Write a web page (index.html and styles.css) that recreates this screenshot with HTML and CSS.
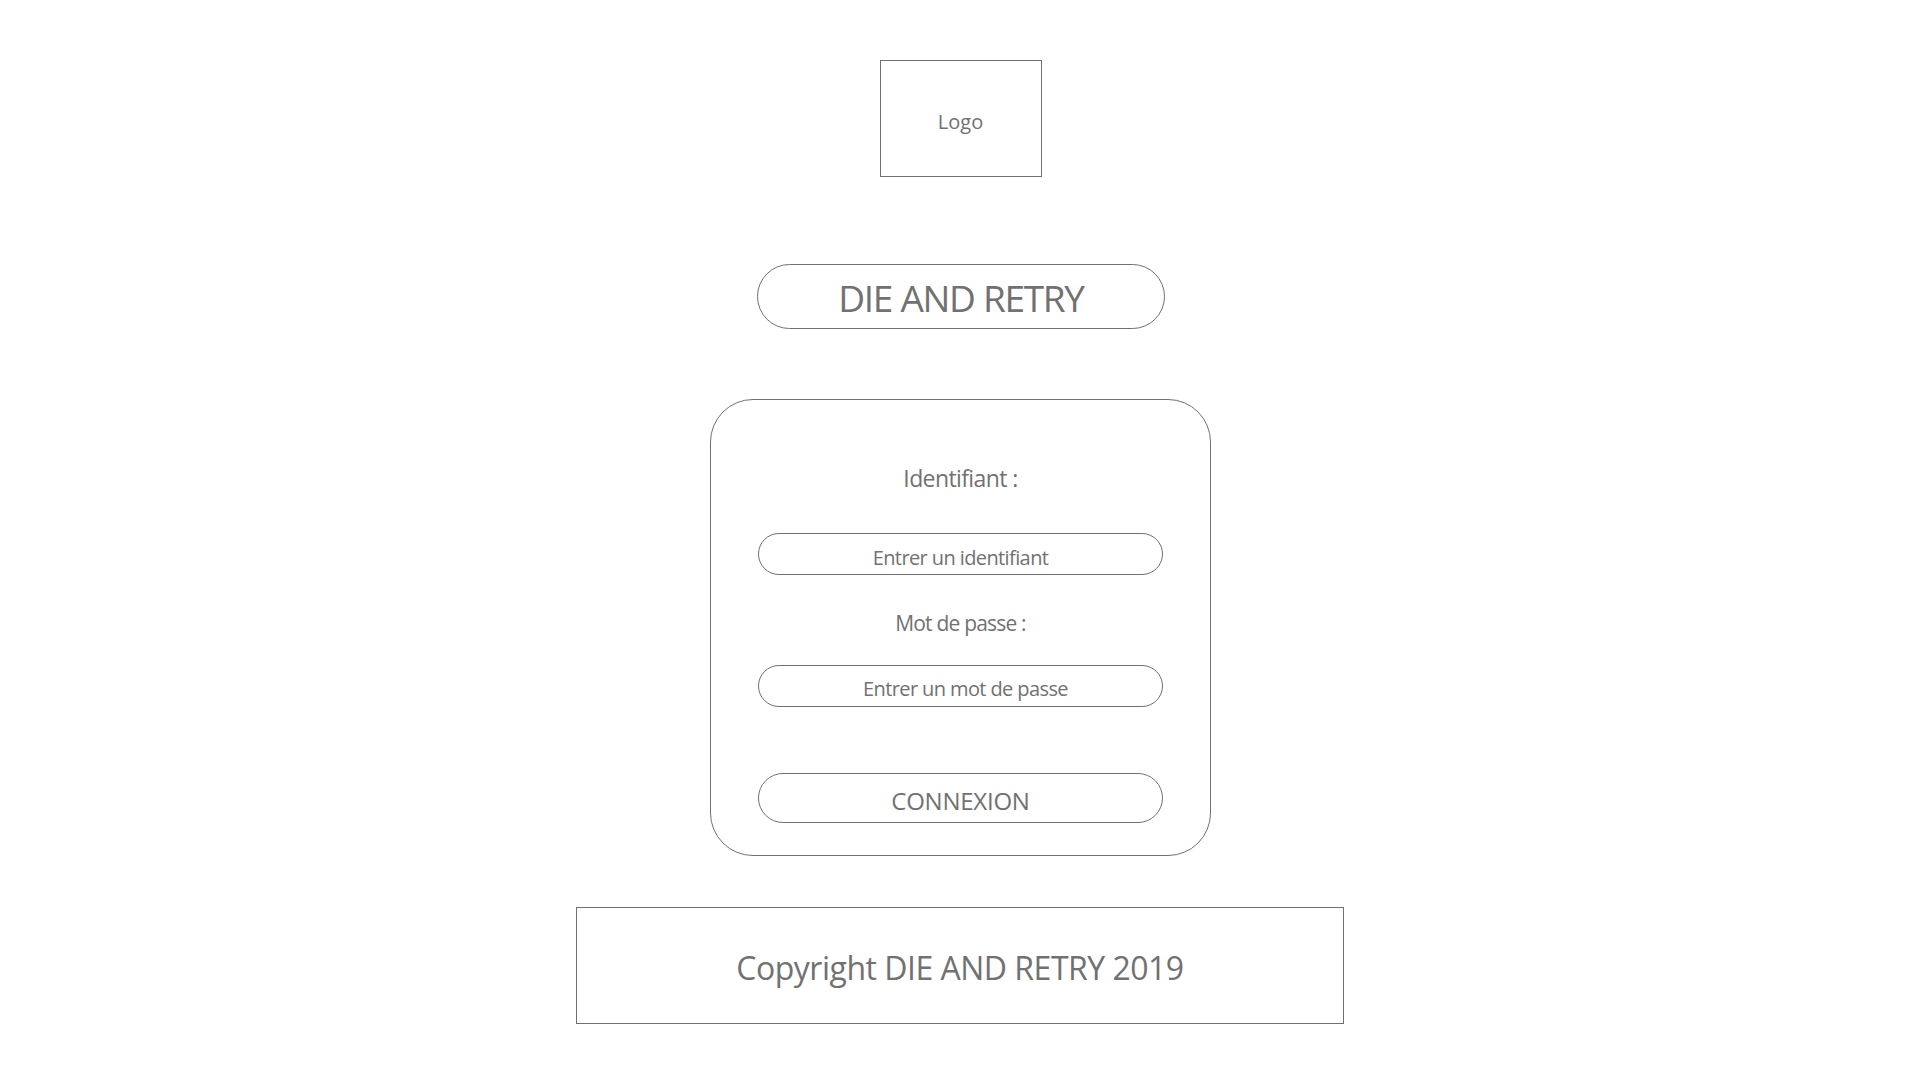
FILE: index.html
```html
<!DOCTYPE html>
<html lang="fr">
<head>
<meta charset="utf-8">
<title>Die and Retry</title>
<link rel="stylesheet" href="styles.css">
</head>
<body>
<div class="page">
  <div class="logo">Logo</div>
  <div class="title">DIE AND RETRY</div>
  <div class="card">
    <div class="label label-id">Identifiant :</div>
    <div class="field field-id">Entrer un identifiant</div>
    <div class="label label-pw">Mot de passe :</div>
    <div class="field field-pw">Entrer un mot de passe</div>
    <div class="button">CONNEXION</div>
  </div>
  <div class="footer">Copyright DIE AND RETRY 2019</div>
</div>
</body>
</html>
```
FILE: styles.css
```css
html, body {
  margin: 0;
  padding: 0;
  background: #ffffff;
}
body {
  font-family: "Open Sans", "Noto Sans", sans-serif;
  color: #717171;
}
.page {
  width: 1920px;
  height: 1080px;
  display: flex;
  flex-direction: column;
  align-items: center;
  box-sizing: border-box;
  padding-top: 60px;
}
.logo {
  width: 162px;
  height: 117px;
  box-sizing: border-box;
  border: 1px solid #707070;
  display: flex;
  align-items: center;
  justify-content: center;
  padding-top: 5px;
  font-size: 20px;
  margin-left: 1px;
}
.title {
  margin-top: 87px;
  width: 408px;
  height: 65px;
  box-sizing: border-box;
  border: 1px solid #707070;
  border-radius: 33px;
  display: flex;
  align-items: center;
  justify-content: center;
  font-size: 37px;
  letter-spacing: -1.3px;
  padding-top: 2px;
  margin-left: 2px;
}
.card {
  margin-top: 70px;
  width: 501px;
  height: 457px;
  box-sizing: border-box;
  border: 1px solid #707070;
  border-radius: 43px;
  display: flex;
  flex-direction: column;
  align-items: center;
  padding-top: 62px;
  margin-left: 1px;
}
.label {
  text-align: center;
}
.label-id {
  font-size: 23px;
  line-height: 32px;
  letter-spacing: -0.6px;
}
.label-pw {
  font-size: 21px;
  line-height: 28px;
  margin-top: 34px;
  letter-spacing: -0.8px;
}
.field, .button {
  width: 405px;
  box-sizing: border-box;
  border: 1px solid #707070;
  display: flex;
  align-items: center;
  justify-content: center;
}
.field {
  height: 42px;
  border-radius: 21px;
  font-size: 20px;
  letter-spacing: -0.6px;
  padding-top: 6px;
}
.field-id {
  margin-top: 39px;
  padding-top: 7px;
}
.field-pw {
  margin-top: 28px;
  padding-top: 4px;
  padding-left: 10px;
}
.button {
  margin-top: 66px;
  height: 50px;
  border-radius: 25px;
  font-size: 24px;
  letter-spacing: -0.25px;
  padding-top: 4px;
}
.footer {
  margin-top: 51px;
  width: 768px;
  height: 117px;
  box-sizing: border-box;
  border: 1px solid #707070;
  display: flex;
  align-items: center;
  justify-content: center;
  font-size: 32px;
  letter-spacing: -0.5px;
  padding-top: 4px;
}
```
